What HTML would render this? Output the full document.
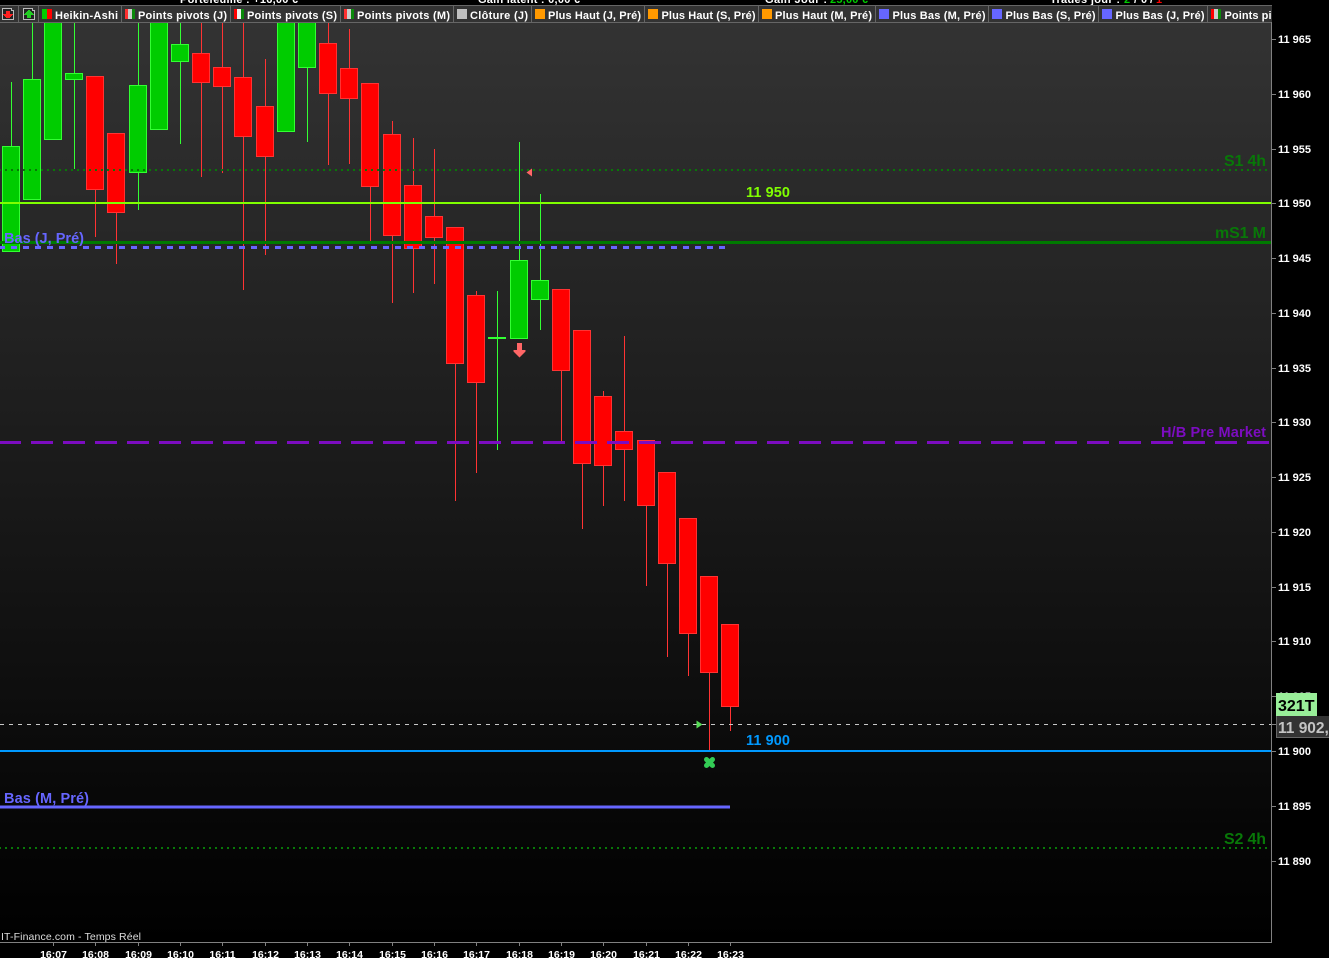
<!DOCTYPE html>
<html><head><meta charset="utf-8"><style>
html,body{margin:0;padding:0;background:#000;width:1329px;height:958px;overflow:hidden}
svg{display:block;font-family:"Liberation Sans",sans-serif}
text{font-weight:bold;fill:#fff}
.t{font-size:11px}
.r{text-anchor:end}
.m{text-anchor:middle;font-size:10.5px}
</style></head><body>
<svg width="1329" height="958" viewBox="0 0 1329 958" xmlns="http://www.w3.org/2000/svg">
<defs><linearGradient id="bg" x1="0" y1="22" x2="0" y2="942" gradientUnits="userSpaceOnUse"><stop offset="0" stop-color="#333"/><stop offset="1" stop-color="#000"/></linearGradient></defs>
<rect width="1329" height="958" fill="#000"/>
<rect x="0" y="22" width="1271" height="920" fill="url(#bg)"/>
<!-- wicks -->
<g fill="#33ff33">
<rect x="11" y="82" width="1" height="64"/><rect x="32" y="20" width="1" height="59"/><rect x="74" y="20" width="1" height="149"/><rect x="138" y="20" width="1" height="190"/><rect x="180" y="20" width="1" height="124"/><rect x="307" y="60" width="1" height="82"/><rect x="497" y="291" width="1" height="159"/><rect x="519" y="142" width="1" height="118"/><rect x="540" y="194" width="1" height="136"/>
<rect x="488" y="337" width="18" height="2"/>
</g>
<g fill="#ff3333">
<rect x="95" y="190" width="1" height="47"/><rect x="116" y="213" width="1" height="51"/><rect x="201" y="20" width="1" height="157"/><rect x="222" y="20" width="1" height="153"/><rect x="243" y="20" width="1" height="270"/><rect x="265" y="59" width="1" height="196"/><rect x="328" y="20" width="1" height="145"/><rect x="349" y="29" width="1" height="135"/><rect x="370" y="187" width="1" height="55"/><rect x="392" y="121" width="1" height="182"/><rect x="413" y="138" width="1" height="155"/><rect x="434" y="149" width="1" height="135"/><rect x="455" y="364" width="1" height="137"/><rect x="476" y="291" width="1" height="182"/><rect x="561" y="371" width="1" height="72"/><rect x="582" y="464" width="1" height="65"/><rect x="603" y="391" width="1" height="115"/><rect x="624" y="336" width="1" height="165"/><rect x="646" y="506" width="1" height="80"/><rect x="667" y="564" width="1" height="93"/><rect x="688" y="634" width="1" height="42"/><rect x="709" y="673" width="1" height="77"/><rect x="730" y="707" width="1" height="24"/>
</g>
<!-- bodies -->
<g fill="#00cc00" stroke="#33ff33" stroke-width="1" shape-rendering="crispEdges">
<rect x="2.5" y="146.5" width="17" height="105"/><rect x="23.5" y="79.5" width="17" height="120"/><rect x="44.5" y="20.5" width="17" height="119"/><rect x="65.5" y="73.5" width="17" height="6"/><rect x="129.5" y="85.5" width="17" height="87"/><rect x="150.5" y="20.5" width="17" height="109"/><rect x="171.5" y="44.5" width="17" height="17"/><rect x="277.5" y="20.5" width="17" height="111"/><rect x="298.5" y="20.5" width="17" height="47"/><rect x="510.5" y="260.5" width="17" height="78"/><rect x="531.5" y="280.5" width="17" height="19"/>
</g>
<g fill="#ff0000" stroke="#ff3333" stroke-width="1" shape-rendering="crispEdges">
<rect x="86.5" y="76.5" width="17" height="113"/><rect x="107.5" y="133.5" width="17" height="79"/><rect x="192.5" y="53.5" width="17" height="29"/><rect x="213.5" y="67.5" width="17" height="19"/><rect x="234.5" y="77.5" width="17" height="59"/><rect x="256.5" y="106.5" width="17" height="50"/><rect x="319.5" y="43.5" width="17" height="50"/><rect x="340.5" y="68.5" width="17" height="30"/><rect x="361.5" y="83.5" width="17" height="103"/><rect x="383.5" y="134.5" width="17" height="101"/><rect x="404.5" y="185.5" width="17" height="63"/><rect x="425.5" y="216.5" width="17" height="21"/><rect x="446.5" y="227.5" width="17" height="136"/><rect x="467.5" y="295.5" width="17" height="87"/><rect x="552.5" y="289.5" width="17" height="81"/><rect x="573.5" y="330.5" width="17" height="133"/><rect x="594.5" y="396.5" width="17" height="69"/><rect x="615.5" y="431.5" width="17" height="18"/><rect x="637.5" y="440.5" width="17" height="65"/><rect x="658.5" y="472.5" width="17" height="91"/><rect x="679.5" y="518.5" width="17" height="115"/><rect x="700.5" y="576.5" width="17" height="96"/><rect x="721.5" y="624.5" width="17" height="82"/>
</g>
<!-- horizontal lines -->
<g shape-rendering="crispEdges" fill="none">
<line x1="-1" y1="170" x2="1268" y2="170" stroke="#087808" stroke-width="2" stroke-dasharray="2 4"/>
<line x1="0" y1="203" x2="1271" y2="203" stroke="#80ff00" stroke-width="2"/>
<line x1="0" y1="242.5" x2="1271" y2="242.5" stroke="#007a00" stroke-width="3"/>
<line x1="-1" y1="247.5" x2="727" y2="247.5" stroke="#6666ff" stroke-width="3" stroke-dasharray="6 6"/>
<line x1="-1" y1="442.5" x2="1271" y2="442.5" stroke="#7c0cc0" stroke-width="3" stroke-dasharray="22 10"/>
<line x1="0" y1="724.5" x2="1271" y2="724.5" stroke="#c8c8c8" stroke-width="1" stroke-dasharray="4 5"/>
<line x1="0" y1="751" x2="1271" y2="751" stroke="#0099ff" stroke-width="2"/>
<line x1="0" y1="807" x2="730" y2="807" stroke="#6666ff" stroke-width="3"/>
<line x1="-1" y1="848" x2="1268" y2="848" stroke="#087808" stroke-width="2" stroke-dasharray="2 4"/>
</g>
<!-- markers -->
<polygon points="532,168.500 532,176.500 526.500,172.500" fill="#ff6666"/>
<polygon points="517,343 522,343 522,350 525.500,350 525.500,351.500 519.500,357.500 513.500,351.500 513.500,350 517,350" fill="#ff6666"/>
<polygon points="696.500,720.500 696.500,728.500 702.500,724.500" fill="#55dd55"/>
<g stroke="#33cc55" stroke-width="5" stroke-linecap="round"><line x1="706.500" y1="759.500" x2="712.500" y2="765.500"/><line x1="712.500" y1="759.500" x2="706.500" y2="765.500"/></g>
<!-- chart labels -->
<text x="746" y="197" font-size="14.5" style="fill:#80ff00" textLength="44">11 950</text>
<text x="746" y="745" font-size="14.5" style="fill:#0099ff" textLength="44">11 900</text>
<text x="4" y="243" font-size="14.5" style="fill:#6666ff" textLength="80">Bas (J, Pré)</text>
<text x="4" y="803" font-size="14.5" style="fill:#6666ff" textLength="85">Bas (M, Pré)</text>
<text x="1224" y="166" font-size="16" style="fill:#087808" textLength="42">S1 4h</text>
<text x="1215" y="238" font-size="16" style="fill:#087808" textLength="51">mS1 M</text>
<text x="1161" y="437" font-size="14.5" style="fill:#7c0cc0" textLength="105">H/B Pre Market</text>
<text x="1224" y="844" font-size="16" style="fill:#087808" textLength="42">S2 4h</text>
<text x="1" y="940" font-size="10.5" style="font-weight:normal;fill:#ddd" textLength="140">IT-Finance.com - Temps Réel</text>
<!-- top status -->
<g class="t">
<text x="180" y="3" textLength="118">Portefeuille : +16,00 €</text>
<text x="478" y="3" textLength="102">Gain latent : 0,00 €</text>
<text x="765" y="3" textLength="62">Gain Jour :</text><text x="830" y="3" textLength="38" style="fill:#00cc00">25,00 €</text>
<text x="1050" y="3" textLength="70">Trades jour :</text><text x="1124" y="3" style="fill:#00cc00">2</text><text x="1134" y="3">/</text><text x="1141" y="3">0</text><text x="1150" y="3">/</text><text x="1156" y="3" style="fill:#ff0000">1</text>
</g>
<!-- tab bar -->
<rect x="0" y="5" width="1272" height="18" fill="#333"/>
<g fill="#666" shape-rendering="crispEdges">
<rect x="0" y="5" width="1272" height="1"/><rect x="0" y="22" width="1272" height="1"/>
<rect x="18" y="5" width="1" height="18"/><rect x="38" y="5" width="1" height="18"/><rect x="121" y="5" width="1" height="18"/><rect x="230" y="5" width="1" height="18"/><rect x="340" y="5" width="1" height="18"/><rect x="453" y="5" width="1" height="18"/><rect x="531" y="5" width="1" height="18"/><rect x="644" y="5" width="1" height="18"/><rect x="758" y="5" width="1" height="18"/><rect x="875" y="5" width="1" height="18"/><rect x="988" y="5" width="1" height="18"/><rect x="1098" y="5" width="1" height="18"/><rect x="1207" y="5" width="1" height="18"/>
</g>
<!-- file icons -->
<g shape-rendering="crispEdges">
<path d="M2.500 8.500H11.500V10.500H13.500V19.500H2.500Z" fill="#222" stroke="#bbb"/>
<path d="M6 11H10V14H13V15H12V16H11V17H10V18H6V17H5V16H4V15H3V14H6Z" fill="#ff2020"/>
<path d="M23.500 8.500H32.500V10.500H34.500V19.500H23.500Z" fill="#222" stroke="#bbb"/>
<path d="M28 10H30V11H31V12H32V13H33V14H34V15H31V18H27V15H24V14H25V13H26V12H27V11H28Z" fill="#22cc22"/>
</g>
<!-- tab icons -->
<g shape-rendering="crispEdges">
<rect x="42" y="9" width="5" height="10" fill="#00cc00"/><rect x="47" y="9" width="5" height="10" fill="#ff0000"/>
<rect x="125" y="9" width="3" height="10" fill="#ff3030"/><rect x="128" y="9" width="4" height="10" fill="#ccc"/><rect x="132" y="9" width="3" height="10" fill="#0a8a0a"/>
<rect x="234" y="9" width="3" height="10" fill="#ff0000"/><rect x="237" y="9" width="4" height="10" fill="#eee"/><rect x="241" y="9" width="3" height="10" fill="#0a8a0a"/>
<rect x="344" y="9" width="3" height="10" fill="#ff3030"/><rect x="347" y="9" width="4" height="10" fill="#ccc"/><rect x="351" y="9" width="3" height="10" fill="#0a8a0a"/>
<rect x="457" y="9" width="10" height="10" fill="#c0c0c0"/>
<rect x="535" y="9" width="10" height="10" fill="#ff9900"/><rect x="648" y="9" width="10" height="10" fill="#ff9900"/><rect x="762" y="9" width="10" height="10" fill="#ff9900"/>
<rect x="879" y="9" width="10" height="10" fill="#6666ff"/><rect x="992" y="9" width="10" height="10" fill="#6666ff"/><rect x="1102" y="9" width="10" height="10" fill="#6666ff"/>
<rect x="1211" y="9" width="3" height="10" fill="#ff0000"/><rect x="1214" y="9" width="4" height="10" fill="#ccc"/><rect x="1218" y="9" width="3" height="10" fill="#0a8a0a"/>
</g>
<g class="t">
<text x="55" y="19" textLength="63">Heikin-Ashi</text>
<text x="138" y="19" textLength="89">Points pivots (J)</text>
<text x="247" y="19" textLength="90">Points pivots (S)</text>
<text x="357" y="19" textLength="93">Points pivots (M)</text>
<text x="470" y="19" textLength="58">Clôture (J)</text>
<text x="548" y="19" textLength="93">Plus Haut (J, Pré)</text>
<text x="661.500" y="19" textLength="94">Plus Haut (S, Pré)</text>
<text x="775" y="19" textLength="97">Plus Haut (M, Pré)</text>
<text x="892.500" y="19" textLength="93">Plus Bas (M, Pré)</text>
<text x="1005.500" y="19" textLength="90">Plus Bas (S, Pré)</text>
<text x="1115.500" y="19" textLength="89">Plus Bas (J, Pré)</text>
<text x="1224.500" y="19" textLength="47">Points pi</text>
</g>
<!-- axes -->
<g fill="#808080" shape-rendering="crispEdges">
<rect x="1271" y="22" width="1" height="921"/><rect x="0" y="942" width="1272" height="1"/>
<rect x="1272" y="39" width="4" height="1"/><rect x="1272" y="94" width="4" height="1"/><rect x="1272" y="149" width="4" height="1"/><rect x="1272" y="203" width="4" height="1"/><rect x="1272" y="258" width="4" height="1"/><rect x="1272" y="313" width="4" height="1"/><rect x="1272" y="368" width="4" height="1"/><rect x="1272" y="422" width="4" height="1"/><rect x="1272" y="477" width="4" height="1"/><rect x="1272" y="532" width="4" height="1"/><rect x="1272" y="587" width="4" height="1"/><rect x="1272" y="641" width="4" height="1"/><rect x="1272" y="696" width="4" height="1"/><rect x="1272" y="724" width="4" height="1"/><rect x="1272" y="751" width="4" height="1"/><rect x="1272" y="806" width="4" height="1"/><rect x="1272" y="861" width="4" height="1"/>
<rect x="53" y="943" width="1" height="3"/><rect x="95" y="943" width="1" height="3"/><rect x="138" y="943" width="1" height="3"/><rect x="180" y="943" width="1" height="3"/><rect x="222" y="943" width="1" height="3"/><rect x="265" y="943" width="1" height="3"/><rect x="307" y="943" width="1" height="3"/><rect x="349" y="943" width="1" height="3"/><rect x="392" y="943" width="1" height="3"/><rect x="434" y="943" width="1" height="3"/><rect x="476" y="943" width="1" height="3"/><rect x="519" y="943" width="1" height="3"/><rect x="561" y="943" width="1" height="3"/><rect x="603" y="943" width="1" height="3"/><rect x="646" y="943" width="1" height="3"/><rect x="688" y="943" width="1" height="3"/><rect x="730" y="943" width="1" height="3"/>
</g>
<g class="t">
<text x="1278" y="43">11 965</text><text x="1278" y="98">11 960</text><text x="1278" y="153">11 955</text><text x="1278" y="207">11 950</text><text x="1278" y="262">11 945</text><text x="1278" y="317">11 940</text><text x="1278" y="372">11 935</text><text x="1278" y="426">11 930</text><text x="1278" y="481">11 925</text><text x="1278" y="536">11 920</text><text x="1278" y="591">11 915</text><text x="1278" y="645">11 910</text><text x="1278" y="700">11 905</text><text x="1278" y="755">11 900</text><text x="1278" y="810">11 895</text><text x="1278" y="865">11 890</text>
</g>
<g>
<text class="m" x="53.500" y="958">16:07</text><text class="m" x="95.500" y="958">16:08</text><text class="m" x="138.500" y="958">16:09</text><text class="m" x="180.500" y="958">16:10</text><text class="m" x="222.500" y="958">16:11</text><text class="m" x="265.500" y="958">16:12</text><text class="m" x="307.500" y="958">16:13</text><text class="m" x="349.500" y="958">16:14</text><text class="m" x="392.500" y="958">16:15</text><text class="m" x="434.500" y="958">16:16</text><text class="m" x="476.500" y="958">16:17</text><text class="m" x="519.500" y="958">16:18</text><text class="m" x="561.500" y="958">16:19</text><text class="m" x="603.500" y="958">16:20</text><text class="m" x="646.500" y="958">16:21</text><text class="m" x="688.500" y="958">16:22</text><text class="m" x="730.500" y="958">16:23</text>
</g>
<!-- price tags -->
<rect x="1276" y="693" width="41" height="23" fill="#99ee99"/>
<text x="1278" y="711" font-size="16" style="fill:#000">321T</text>
<rect x="1276" y="716" width="53" height="21" fill="#333"/>
<rect x="1276" y="716" width="1" height="22" fill="#666"/><rect x="1276" y="737" width="53" height="1" fill="#666"/>
<text x="1278" y="733" font-size="15.500" style="fill:#c4c4c4">11 902,5</text>
</svg>
</body></html>
